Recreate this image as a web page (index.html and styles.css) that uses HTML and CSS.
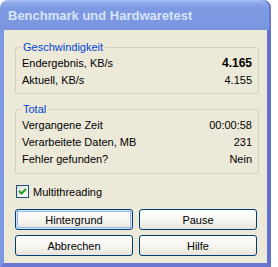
FILE: index.html
```html
<!DOCTYPE html>
<html lang="de">
<head>
    <meta charset="UTF-8">
    <title>Benchmark und Hardwaretest</title>
    <link rel="stylesheet" href="styles.css">
</head>
<body>
    <div class="window">
        <div class="titlebar">Benchmark und Hardwaretest</div>
        <div class="client">
            <fieldset class="group speed">
                <legend>Geschwindigkeit</legend>
                <div class="row"><span>Endergebnis, KB/s</span><span class="strong">4.165</span></div>
                <div class="row"><span>Aktuell, KB/s</span><span>4.155</span></div>
            </fieldset>
            <fieldset class="group total">
                <legend>Total</legend>
                <div class="row"><span>Vergangene Zeit</span><span>00:00:58</span></div>
                <div class="row"><span>Verarbeitete Daten, MB</span><span>231</span></div>
                <div class="row"><span>Fehler gefunden?</span><span>Nein</span></div>
            </fieldset>
            <label class="check">
                <span class="box">
                    <svg width="11" height="11" viewBox="0 0 11 11"><path d="M2 5 L4.5 7.5 L9 3" fill="none" stroke="#21a121" stroke-width="2"/></svg>
                </span>
                Multithreading
            </label>
            <div class="buttons">
                <button class="btn default">Hintergrund</button>
                <button class="btn">Pause</button>
                <button class="btn">Abbrechen</button>
                <button class="btn">Hilfe</button>
            </div>
        </div>
    </div>
</body>
</html>
```

FILE: styles.css
```css
body { margin: 0; background: #fff; font-family: 'Liberation Sans', Arial, sans-serif; font-size: 11px; color: #000; }
.window { width: 271px; height: 267px; display: flex; flex-direction: column; }
.titlebar { height: 30px; box-sizing: border-box; padding: 8px 0 0 8px; border-radius: 8px 8px 0 0; background: linear-gradient(#aec2f2 0, #8ea7e9 3px, #7d99e2 8px, #7b97e1 24px, #7a94de 100%); color: #d8e4f8; font-size: 13px; font-weight: bold; box-shadow: inset -2px 0 0 #6a78d4; }
.client { flex: 1; background: #ece9d8; border: 4px solid #7b97e1; border-top: none; border-right-color: #6470d0; border-bottom-color: #6a78d4; padding: 11px 8px 0 11px; }
.group { margin: 0; padding: 1px 6px 4px 6px; border: 1px solid #d0d0bf; border-radius: 3px; }
.group legend { color: #0046d5; padding: 0 2px; margin-left: -1px; line-height: 13px; }
.total { margin-top: 9px; padding-bottom: 5px; }
.row { display: flex; justify-content: space-between; line-height: 17px; }
.strong { font-weight: bold; font-size: 12px; }
.check { display: flex; align-items: center; gap: 4px; margin: 11px 0 0 1px; height: 13px; }
.box { width: 11px; height: 11px; border: 1px solid #1c5180; background: linear-gradient(135deg, #dcdcd7, #fff); display: flex; }
.buttons { display: grid; grid-template-columns: 118px 118px; gap: 5px 6px; margin-top: 11px; }
.btn { height: 21px; border: 1px solid #003c74; border-radius: 3px; background: linear-gradient(#fff, #f4f3ee 60%, #e6e4da); font-family: inherit; font-size: 11px; color: #000; padding: 0; }
.btn.default { box-shadow: inset 0 0 0 1px #cee7ff, inset 0 0 0 2px #98b8ea; }
```
